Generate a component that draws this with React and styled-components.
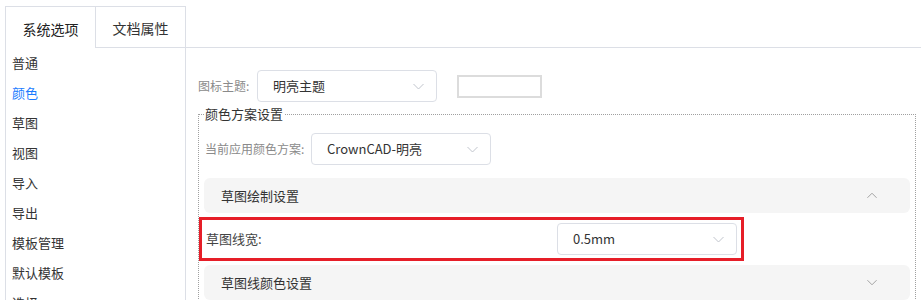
import React from "react";
import styled, { createGlobalStyle } from "styled-components";

const Global = createGlobalStyle`
  html, body { margin: 0; padding: 0; overflow: hidden; background: #fff; }
  body { font-family: "Noto Sans CJK SC", "Noto Sans", sans-serif; font-size: 13px; color: #333; }
  * { box-sizing: border-box; }
`;

const Page = styled.div`
  padding: 6px 0 0 5px;
  height: 300px;
  overflow: hidden;
`;

const TabBar = styled.div`
  display: flex;
  height: 42px;
`;

const Tab = styled.div`
  width: ${(p) => (p.$active ? 91 : 90)}px;
  height: 42px;
  border-top: 1px solid #dcdfe6;
  border-right: 1px solid #dcdfe6;
  border-left: ${(p) => (p.$active ? "1px solid #dcdfe6" : "none")};
  border-bottom: ${(p) => (p.$active ? "none" : "1px solid #dcdfe6")};
  display: flex;
  align-items: center;
  justify-content: center;
  padding-top: 2px;
  font-size: 14px;
  line-height: 20px;
  color: ${(p) => (p.$active ? "#222" : "#333")};
`;

const TabFiller = styled.div`
  flex: 1;
  border-bottom: 1px solid #dcdfe6;
`;

const Body = styled.div`
  display: flex;
  height: 260px;
`;

const Sidebar = styled.div`
  width: 181px;
  flex: none;
  border-left: 1px solid #dcdfe6;
  border-right: 1px solid #dcdfe6;
`;

const NavItem = styled.div`
  height: 30px;
  padding-left: 6px;
  display: flex;
  align-items: center;
  font-size: 13px;
  line-height: 20px;
  color: ${(p) => (p.$active ? "#1a7cff" : "#333")};
`;

const Content = styled.div`
  flex: 1;
  padding: 22px 5px 0 12px;
  min-width: 0;
`;

const TopRow = styled.div`
  display: flex;
  align-items: center;
  height: 32px;
`;

const Label = styled.div`
  width: ${(p) => p.$w}px;
  flex: none;
  white-space: nowrap;
  color: ${(p) => p.$color || "#8a8a8a"};
  font-size: ${(p) => p.$fs || 12}px;
  line-height: 20px;
  padding-left: ${(p) => p.$pl || 0}px;
`;

const SelectBox = styled.div`
  width: 180px;
  height: 32px;
  flex: none;
  border: 1px solid #dcdfe6;
  border-radius: 4px;
  display: flex;
  align-items: center;
  justify-content: space-between;
  padding: 0 12px 0 15px;
  font-size: 13px;
  line-height: 20px;
  color: #333;
  background: #fff;
`;

const ColorSwatch = styled.div`
  width: 85px;
  height: 23px;
  margin-left: 20px;
  border: 2px solid #dcdcdc;
`;

const Fieldset = styled.fieldset`
  margin: 3px 0 0 0;
  padding: 10px 5px 0 5px;
  border: 1px dotted #a0a0a0;
  min-width: 0;
`;

const Legend = styled.legend`
  padding: 0 1px;
  font-size: 13px;
  line-height: 18px;
  color: #333;
`;

const SchemeRow = styled.div`
  display: flex;
  align-items: center;
  height: 32px;
`;

const ScrollArea = styled.div`
  margin: 11px 0 0 -5px;
  padding: 2px 0 0 5px;
  height: 230px;
  overflow-y: scroll;
  &::-webkit-scrollbar { width: 4px; }
  &::-webkit-scrollbar-track { background: transparent; }
  &::-webkit-scrollbar-thumb { background: #c9c9c9; border-radius: 2px 2px 0 0; }
`;

const PanelHeader = styled.div`
  height: 35px;
  background: #f5f5f5;
  border-radius: 6px;
  display: flex;
  align-items: center;
  justify-content: space-between;
  padding: 0 33px 0 17px;
  font-size: 13px;
  line-height: 20px;
  color: #333;
`;

const FormRow = styled.div`
  position: relative;
  height: 52px;
  display: grid;
  grid-template-columns: 353px 180px;
  align-items: center;
`;

const Annotation = styled.div`
  position: absolute;
  left: -5px;
  top: 4px;
  width: 545px;
  height: 44px;
  border: 3px solid #e61e28;
  pointer-events: none;
`;

const Spacer = styled.div`
  height: 200px;
`;

const Chevron = ({ up, color = "#c0c4cc", w = 11 }) => (
  <svg width={w} height="7" viewBox="0 0 11 7" fill="none">
    <polyline
      points={up ? "0.5,6 5.5,1 10.5,6" : "0.5,1 5.5,6 10.5,1"}
      stroke={color}
      strokeWidth="1"
    />
  </svg>
);

const navItems = ["普通", "颜色", "草图", "视图", "导入", "导出", "模板管理", "默认模板", "选择"];

export default function App() {
  return (
    <>
      <Global />
      <Page>
        <TabBar>
          <Tab $active>系统选项</Tab>
          <Tab>文档属性</Tab>
          <TabFiller />
        </TabBar>
        <Body>
          <Sidebar>
            {navItems.map((n) => (
              <NavItem key={n} $active={n === "颜色"}>
                {n}
              </NavItem>
            ))}
          </Sidebar>
          <Content>
            <TopRow>
              <Label $w={59}>图标主题:</Label>
              <SelectBox>
                <span>明亮主题</span>
                <Chevron />
              </SelectBox>
              <ColorSwatch />
            </TopRow>
            <Fieldset>
              <Legend>颜色方案设置</Legend>
              <SchemeRow>
                <Label $w={107} $pl={1}>当前应用颜色方案:</Label>
                <SelectBox>
                  <span>CrownCAD-明亮</span>
                  <Chevron />
                </SelectBox>
              </SchemeRow>
              <ScrollArea>
                <PanelHeader>
                  <span>草图绘制设置</span>
                  <Chevron up color="#999" w={10} />
                </PanelHeader>
                <FormRow>
                  <Label $w={353} $pl={2} $fs={13} $color="#444">草图线宽:</Label>
                  <SelectBox>
                    <span>0.5mm</span>
                    <Chevron />
                  </SelectBox>
                  <Annotation />
                </FormRow>
                <PanelHeader>
                  <span>草图线颜色设置</span>
                  <Chevron color="#999" w={10} />
                </PanelHeader>
                <Spacer />
              </ScrollArea>
            </Fieldset>
          </Content>
        </Body>
      </Page>
    </>
  );
}
